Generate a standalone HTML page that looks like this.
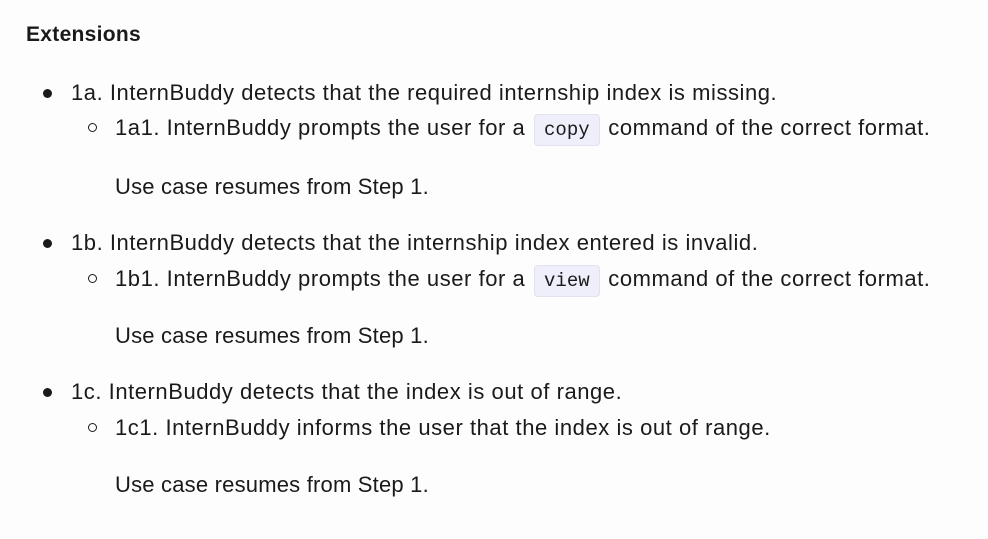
<!DOCTYPE html>
<html><head><style>
body{margin:0;width:988px;height:539px;background:#fdfdfd;font-family:"Liberation Sans",sans-serif;color:#1a1a1a;position:relative;overflow:hidden}
.l{position:absolute;white-space:nowrap;font-size:22px;line-height:30px;letter-spacing:0.55px}
.u{letter-spacing:0.2px}
h{position:absolute;left:26px;top:21px;font-weight:bold;font-size:21px;line-height:28px;letter-spacing:0.3px}
.d{position:absolute;width:9px;height:9px;border-radius:50%;background:#1a1a1a}
.c{position:absolute;width:7px;height:7px;border-radius:50%;border:1.5px solid #1a1a1a}
code{font-family:"Liberation Mono",monospace;font-size:19px;letter-spacing:0;background:#efeffb;border:1px solid #e2e2ee;border-radius:4px;padding:4px 9px;margin:0 2px}
</style></head><body>
<h>Extensions</h>
<div class="d" style="left:43px;top:89px"></div><div class="l" style="left:71px;top:78px">1a. InternBuddy detects that the required internship index is missing.</div>
<div class="c" style="left:88px;top:123px"></div><div class="l" style="left:115px;top:113px">1a1. InternBuddy prompts the user for a <code>copy</code> command of the correct format.</div>
<div class="l u" style="left:115px;top:172px">Use case resumes from Step 1.</div>
<div class="d" style="left:43px;top:239px"></div><div class="l" style="left:71px;top:228px">1b. InternBuddy detects that the internship index entered is invalid.</div>
<div class="c" style="left:88px;top:274px"></div><div class="l" style="left:115px;top:264px">1b1. InternBuddy prompts the user for a <code>view</code> command of the correct format.</div>
<div class="l u" style="left:115px;top:321px">Use case resumes from Step 1.</div>
<div class="d" style="left:43px;top:388px"></div><div class="l" style="left:71px;top:377px">1c. InternBuddy detects that the index is out of range.</div>
<div class="c" style="left:88px;top:423px"></div><div class="l" style="left:115px;top:413px">1c1. InternBuddy informs the user that the index is out of range.</div>
<div class="l u" style="left:115px;top:470px">Use case resumes from Step 1.</div>
</body></html>
